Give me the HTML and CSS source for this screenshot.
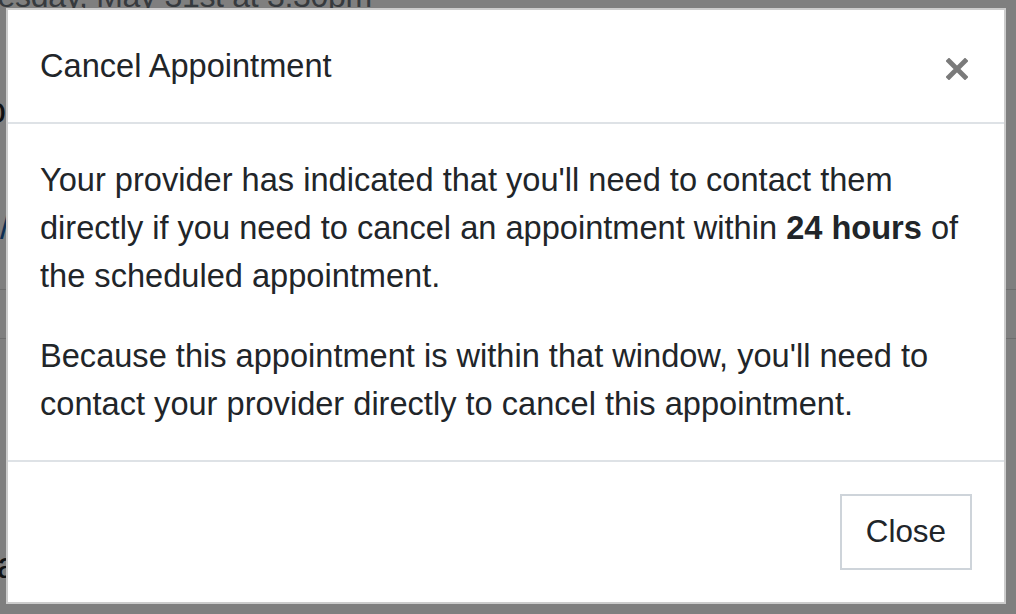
FILE: index.html
```html
<!DOCTYPE html>
<html>
<head>
    <title>Cancel Appointment</title>
    <link rel="stylesheet" href="styles.css">
</head>
<body>
<!-- page behind the dialog -->
<div class="page">
    <div class="appt-time">Tuesday, May 31st at 3:30pm</div>
    <div class="appt-row appt-provider">o</div>
    <div class="appt-row appt-link"><a href="#">/</a></div>
    <div class="appt-rule"></div>
    <div class="appt-rule appt-rule-2"></div>
    <div class="appt-row appt-note">a</div>
</div>

<div class="backdrop"></div>

<div class="modal">
    <div class="modal-content">
        <div class="modal-header">
            <h5 class="modal-title">Cancel Appointment</h5>
            <button class="close" aria-label="Close">
                <svg width="22" height="22" viewBox="0 0 22 22">
                    <path d="M3 3 L19 19 M19 3 L3 19" stroke="currentColor" stroke-width="4.8" stroke-linecap="square" fill="none"/>
                </svg>
            </button>
        </div>
        <div class="modal-body">
            <p>Your provider has indicated that you'll need to contact them directly if you need to cancel an appointment within <strong>24 hours</strong> of the scheduled appointment.</p>
            <p>Because this appointment is within that window, you'll need to contact your provider directly to cancel this appointment.</p>
        </div>
        <div class="modal-footer">
            <button class="btn">Close</button>
        </div>
    </div>
</div>
</body>
</html>
```

FILE: styles.css
```css
/* base */
body {
    margin: 0;
    background: #fff;
    color: #212529;
    font-family: "Liberation Sans", Arial, sans-serif;
    font-size: 32.6px;
    line-height: 48px;
    overflow: hidden;
}

/* page behind */
.page {
    margin-top: -28px;
}
.appt-time {
    height: 48px;
    text-indent: -38px;
    color: #6c757d;
    white-space: nowrap;
    font-size: 32px;
    letter-spacing: -0.3px;
}
.appt-row {
    height: 48px;
    font-size: 36px;
}
.appt-provider {
    margin-top: 67px;
    text-indent: -14px;
}
.appt-link {
    margin-top: 68px;
}
.appt-link a {
    color: #1d5fa6;
    text-decoration: none;
}
.appt-rule {
    margin-top: 38px;
    height: 1px;
    background: #dcdcdc;
}
.appt-rule-2 {
    margin-top: 48px;
}
.appt-note {
    margin-top: 203px;
    text-indent: -3px;
}

/* dialog */
.backdrop {
    position: fixed;
    inset: 0;
    background: rgba(0, 0, 0, 0.5);
}
.modal {
    position: fixed;
    top: 8px;
    left: 6px;
    width: 1000px;
}
.modal-content {
    display: flex;
    flex-direction: column;
    background: #fff;
    border: 2px solid rgba(0, 0, 0, 0.2);
}
.modal-header {
    display: flex;
    align-items: center;
    padding: 32px;
    border-bottom: 2px solid #dee2e6;
}
.modal-title {
    margin: 0;
    font-size: 32.6px;
    font-weight: 400;
    line-height: 48px;
}
.close {
    margin: 6px 4px 0 auto;
    padding: 0;
    border: none;
    background: none;
    color: #7a7a7a;
    display: flex;
}
.modal-body {
    padding: 32px;
}
.modal-body p {
    margin: 0 0 32px;
}
.modal-body p:last-child {
    margin-bottom: 0;
}
.modal-body strong {
    font-weight: 700;
}
.modal-footer {
    display: flex;
    justify-content: flex-end;
    padding: 32px;
    border-top: 2px solid #dee2e6;
}
.btn {
    font-family: inherit;
    font-size: 31.4px;
    line-height: 48px;
    color: #212529;
    background: #fff;
    border: 2px solid #ced4da;
    padding: 12px 24px;
}
```
